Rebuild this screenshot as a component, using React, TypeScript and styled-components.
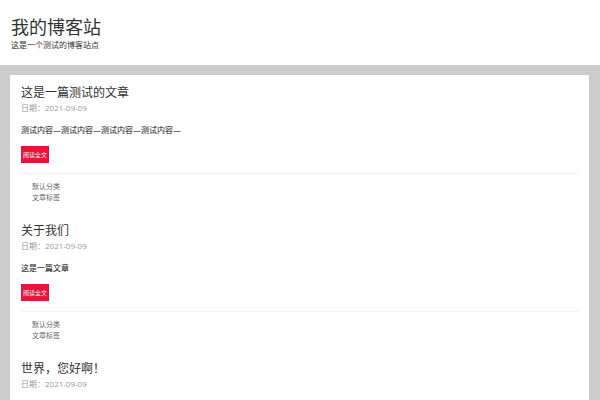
import React from "react";
import styled, { createGlobalStyle } from "styled-components";

const Global = createGlobalStyle`
  html, body { margin: 0; padding: 0; background: #cccccc; }
  body { font-family: "Open Sans", "Noto Sans CJK SC", sans-serif; color: #333; }
`;

const Page = styled.div`
  width: 600px;
  height: 400px;
  overflow: hidden;
  background: #cccccc;
`;

const Header = styled.header`
  background: #ffffff;
  height: 65px;
  padding: 16px 11px 0;
  box-sizing: border-box;
`;

const SiteTitle = styled.h1`
  margin: 0;
  font-size: 18px;
  line-height: 22px;
  font-weight: 400;
  color: #333;
`;

const SiteDesc = styled.p`
  margin: 1px 0 0;
  font-size: 8px;
  line-height: 12px;
  color: #333;
`;

const Main = styled.main`
  padding: 10px 11px 0 10px;
`;

const Card = styled.div`
  background: #ffffff;
  padding: 0 10px 20px 11px;
`;

const Article = styled.article`
  padding-top: 9px;
`;

const Title = styled.h2`
  margin: 0;
  font-size: 12px;
  line-height: 18px;
  font-weight: 400;
  color: #333;
`;

const Meta = styled.div`
  font-size: 8px;
  line-height: 12px;
  color: #999;
`;

const Excerpt = styled.p`
  margin: 9px 0 0;
  font-size: 8px;
  line-height: 14px;
  color: #111;
`;

const ReadMore = styled.a`
  display: flex;
  align-items: center;
  justify-content: center;
  width: 28px;
  height: 17px;
  margin-top: 9px;
  background: #e8143c;
  color: #fff;
  font-size: 6px;
  text-decoration: none;
`;

const Divider = styled.hr`
  border: 0;
  border-top: 1px solid #f2f2f2;
  margin: 10px 0 0;
`;

const Links = styled.ul`
  list-style: none;
  margin: 7px 0 0;
  padding: 0 0 10px 11px;
`;

const LinkItem = styled.li`
  font-size: 7px;
  line-height: 11px;
  color: #666;
`;

type Post = { title: string; date: string; excerpt: string };

const posts: Post[] = [
  { title: "这是一篇测试的文章", date: "2021-09-09", excerpt: "测试内容—测试内容—测试内容—测试内容—" },
  { title: "关于我们", date: "2021-09-09", excerpt: "这是一篇文章" },
  { title: "世界，您好啊！", date: "2021-09-09", excerpt: "欢迎使用博客系统" },
];

export default function App() {
  return (
    <Page>
      <Global />
      <Header>
        <SiteTitle>我的博客站</SiteTitle>
        <SiteDesc>这是一个测试的博客站点</SiteDesc>
      </Header>
      <Main>
        <Card>
          {posts.map((p, i) => (
            <Article key={i}>
              <Title>{p.title}</Title>
              <Meta>日期：{p.date}</Meta>
              <Excerpt>{p.excerpt}</Excerpt>
              <ReadMore href="#">阅读全文</ReadMore>
              <Divider />
              <Links>
                <LinkItem>默认分类</LinkItem>
                <LinkItem>文章标签</LinkItem>
              </Links>
            </Article>
          ))}
        </Card>
      </Main>
    </Page>
  );
}
